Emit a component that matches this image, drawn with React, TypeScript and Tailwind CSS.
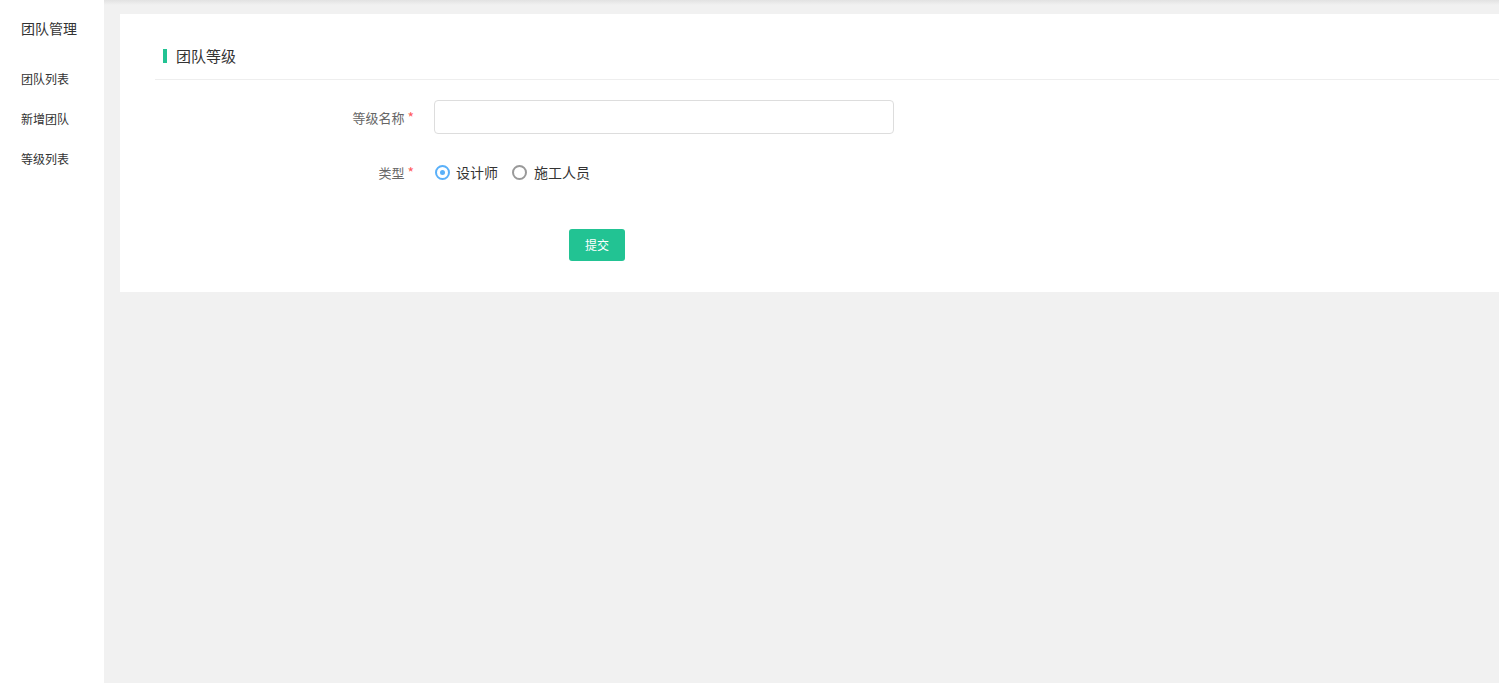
const menu = ["团队列表", "新增团队", "等级列表"];

export default function App() {
  return (
    <div
      className="flex h-[683px] w-full overflow-hidden bg-[#f1f1f1] text-[#333]"
      style={{ fontFamily: '"Noto Sans CJK SC", "Noto Sans", sans-serif' }}
    >
      <aside className="w-[104px] shrink-0 bg-white">
        <div className="h-[58px] pl-[21px] pt-[17px] text-[14px] leading-[22px] text-[#333]">团队管理</div>
        <ul className="mt-[1px]">
          {menu.map((item) => (
            <li key={item} className="flex h-[40px] items-center pl-[21px] text-[12px] text-[#333]">
              {item}
            </li>
          ))}
        </ul>
      </aside>

      <main className="relative flex-1 pl-[16px] pt-[14px]">
        <div className="pointer-events-none absolute inset-x-0 top-0 h-[5px] bg-gradient-to-b from-[#e2e2e2] to-[#f1f1f1]" />
        <section className="relative bg-white pb-[31px]">
          <div className="ml-[35px] flex h-[66px] items-center border-b border-[#eeeeee] pl-[8px] pt-[19px]">
            <span className="h-[14px] w-[4px] bg-[#22c393]" />
            <h2 className="ml-[9px] text-[15px] leading-[20px] text-[#333]">团队等级</h2>
          </div>

          <form className="pt-[20px]">
            <div className="flex h-[34px] items-center">
              <label className="w-[314px] pr-[20px] text-right text-[13px] text-[#666]">
                等级名称 <span className="text-[14px] text-[#ff5b5b]">*</span>
              </label>
              <input
                type="text"
                className="h-[34px] w-[460px] rounded-[4px] border border-[#dddddd] bg-white px-[10px] text-[13px] outline-none"
              />
            </div>

            <div className="mt-[21px] flex h-[34px] items-center">
              <label className="w-[314px] pr-[20px] text-right text-[13px] text-[#666]">
                类型 <span className="text-[14px] text-[#ff5b5b]">*</span>
              </label>
              <div className="flex items-center text-[14px] text-[#333]">
                <span className="ml-[1px] flex h-[15px] w-[15px] items-center justify-center rounded-full border-2 border-[#5ab0f9]">
                  <span className="h-[5px] w-[5px] rounded-full bg-[#5ab0f9]" />
                </span>
                <span className="ml-[6px]">设计师</span>
                <span className="ml-[14px] h-[15px] w-[15px] rounded-full border-2 border-[#999999]" />
                <span className="ml-[7px]">施工人员</span>
              </div>
            </div>

            <div className="mt-[40px] pl-[449px]">
              <button
                type="button"
                className="h-[32px] w-[56px] rounded-[3px] bg-[#22c393] text-[12px] text-white"
              >
                提交
              </button>
            </div>
          </form>
        </section>
      </main>
    </div>
  );
}
